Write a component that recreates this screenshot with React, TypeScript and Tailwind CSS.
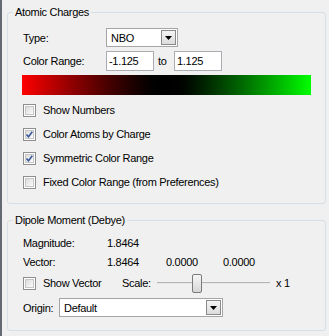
import React from 'react';

function Arrow() {
  return (
    <svg width="7" height="4" viewBox="0 0 7 4">
      <path d="M0 0h7L3.5 4z" fill="#000" />
    </svg>
  );
}

function ComboBox({ value, width }: { value: string; width: string }) {
  return (
    <div className={`${width} h-[19px] flex items-center bg-white border border-[#a5a5a5]`}>
      <span className="flex-1 pl-[4px]">{value}</span>
      <div className="w-[15px] h-[15px] mr-px flex items-center justify-center border border-[#8a8a8a] bg-linear-to-b from-[#f4f4f4] to-[#dcdcdc]">
        <Arrow />
      </div>
    </div>
  );
}

function TextBox({ value }: { value: string }) {
  return (
    <div className="w-[48px] h-[20px] flex items-center bg-white border border-[#abadb3] pl-[2px]">
      {value}
    </div>
  );
}

function Checkbox({ checked }: { checked?: boolean }) {
  return (
    <div className="w-[13px] h-[13px] border border-[#8e8f8f] bg-white p-px shrink-0">
      <div className="w-full h-full border border-[#c6c6c6] bg-linear-to-br from-[#dcdcdc] to-[#fbfbfb] flex items-center justify-center">
        {checked && (
          <svg width="7" height="7" viewBox="0 0 7 7">
            <path d="M0.5 3.5 L2.5 5.8 L6.3 0.8" stroke="#3c5a9a" strokeWidth="1.6" fill="none" />
          </svg>
        )}
      </div>
    </div>
  );
}

function CheckRow({ label, checked }: { label: string; checked?: boolean }) {
  return (
    <div className="h-[24px] flex items-center">
      <Checkbox checked={checked} />
      <span className="ml-[7px]">{label}</span>
    </div>
  );
}

export default function App() {
  return (
    <div className="w-[329px] h-[336px] bg-[#f0f0f0] flex text-[11px] leading-[16px] tracking-[-0.3px] text-black font-['Liberation_Sans',Arial,sans-serif] overflow-hidden">
      <div className="w-[2px] h-full bg-[#646a73]" />
      <div className="pl-[5px] flex flex-col">
        {/* Atomic Charges */}
        <fieldset className="mt-[4px] w-[319px] h-[200px] border border-[#d5dfe5] rounded-[3px]">
          <legend className="ml-[5px] px-[2px]">Atomic Charges</legend>
          <div className="pl-[15px] flex flex-col">
            <div className="mt-[8px] flex items-center">
              <span className="w-[83px]">Type:</span>
              <ComboBox value="NBO" width="w-[72px]" />
            </div>
            <div className="mt-[4px] flex items-center">
              <span className="w-[83px]">Color Range:</span>
              <TextBox value="-1.125" />
              <span className="ml-[4px] w-[16px]">to</span>
              <TextBox value="1.125" />
            </div>
            <div className="mt-[4px] -ml-px w-[289px] h-[20px] bg-linear-to-r from-[#ff0000] via-black to-[#00ff00]" />
            <div className="mt-[3px] flex flex-col">
              <CheckRow label="Show Numbers" />
              <CheckRow label="Color Atoms by Charge" checked />
              <CheckRow label="Symmetric Color Range" checked />
              <CheckRow label="Fixed Color Range (from Preferences)" />
            </div>
          </div>
        </fieldset>

        {/* Dipole Moment */}
        <fieldset className="mt-[8px] w-[319px] h-[119px] border border-[#d5dfe5] rounded-[3px]">
          <legend className="ml-[5px] px-[2px]">Dipole Moment (Debye)</legend>
          <div className="pl-[15px] flex flex-col">
            <div className="mt-[7px] h-[16px] flex items-center">
              <span className="w-[84px]">Magnitude:</span>
              <span>1.8464</span>
            </div>
            <div className="mt-[3px] h-[16px] flex items-center">
              <span className="w-[84px]">Vector:</span>
              <span className="w-[59px]">1.8464</span>
              <span className="w-[57px]">0.0000</span>
              <span>0.0000</span>
            </div>
            <div className="mt-[3px] h-[20px] flex items-center">
              <div className="w-[99px] flex items-center">
                <Checkbox />
                <span className="ml-[7px]">Show Vector</span>
              </div>
              <span className="w-[33px]">Scale:</span>
              <div className="relative w-[118px] h-[20px] flex items-center">
                <div className="ml-[2px] w-[113px] h-[2px] border-t border-[#b5b5b5] bg-[#e8e8e8]" />
                <div className="absolute left-[37px] top-px w-[10px] h-[19px] rounded-[2px] border border-[#7a7a7a] bg-linear-to-b from-[#f6f6f6] to-[#d6d6d6]" />
              </div>
              <span className="ml-[3px]">x 1</span>
            </div>
            <div className="mt-[5px] flex items-center">
              <span className="w-[36px]">Origin:</span>
              <ComboBox value="Default" width="w-[164px]" />
            </div>
          </div>
        </fieldset>
      </div>
    </div>
  );
}
